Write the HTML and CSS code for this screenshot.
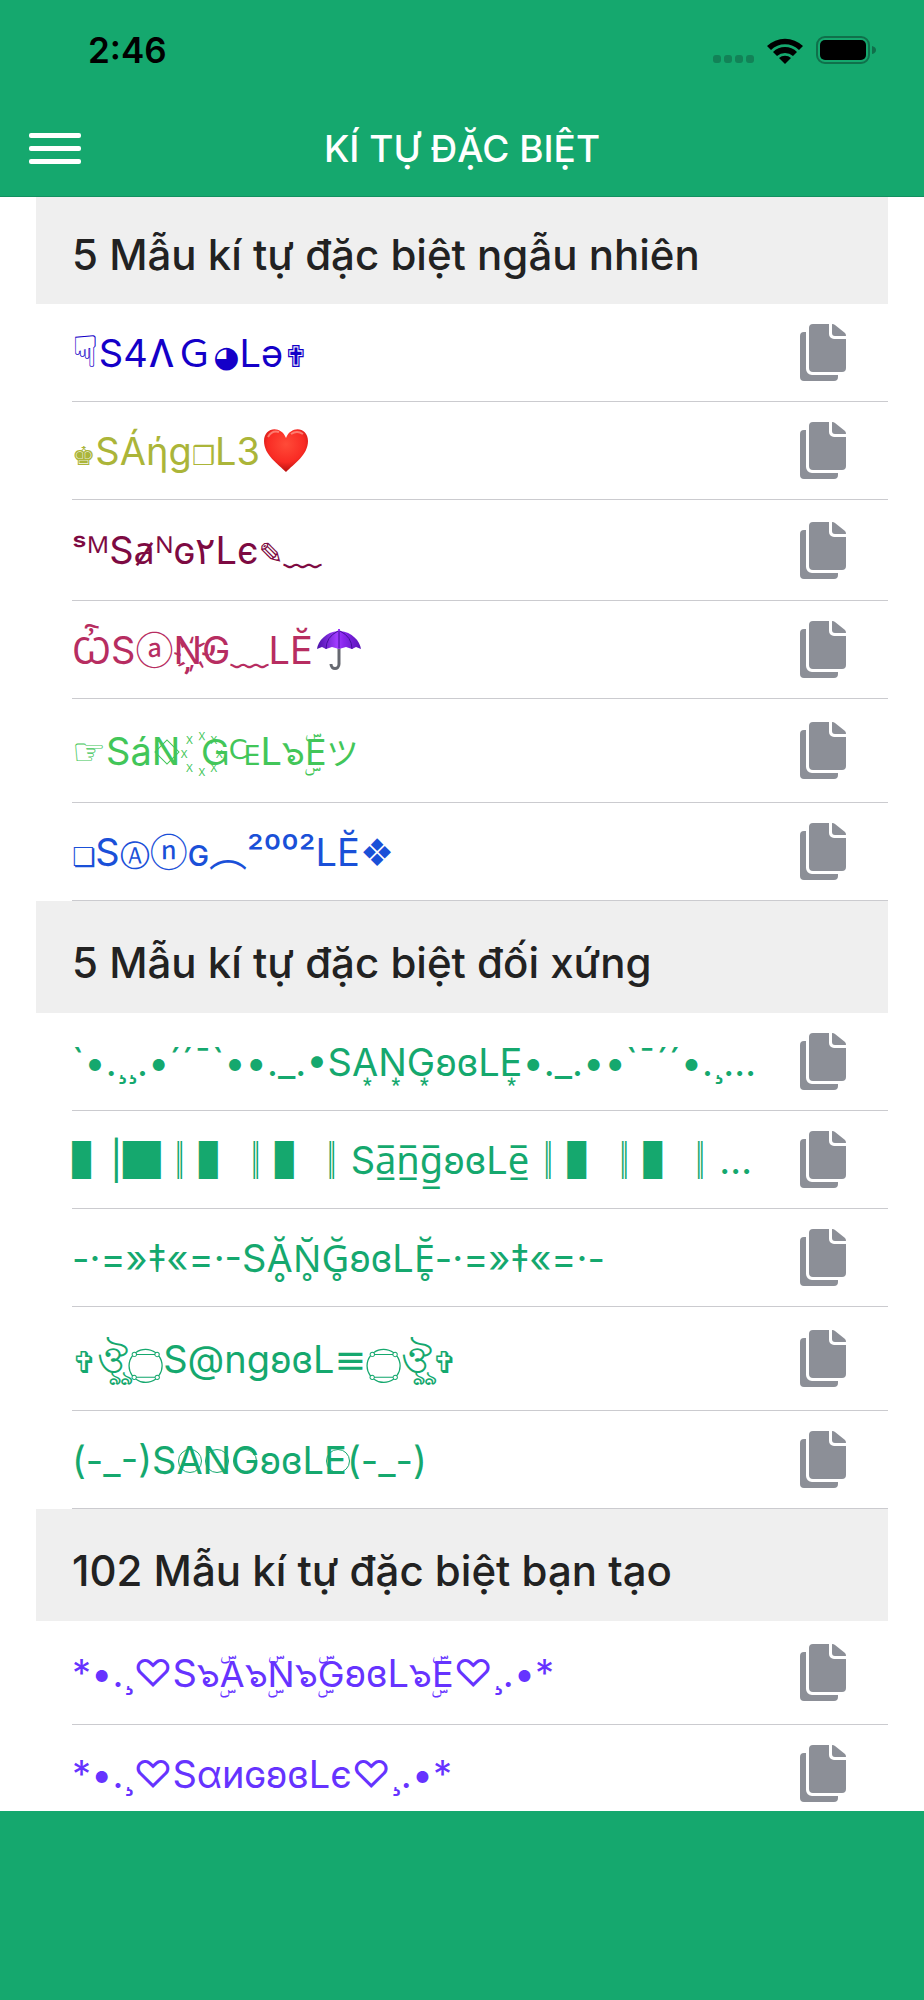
FILE: index.html
```html
<!DOCTYPE html>
<html lang="vi">
<head>
    <meta charset="UTF-8">
    <meta name="viewport" content="width=device-width, initial-scale=1.0">
    <title>Kí tự đặc biệt</title>
    <link rel="stylesheet" href="styles.css">
</head>
<body>
    <svg class="sprite" aria-hidden="true">
        <symbol id="copy" viewBox="0 0 46 57">
            <path d="M6 8H4a4 4 0 0 0-4 4v41a4 4 0 0 0 4 4h30a4 4 0 0 0 4-4v-2H12a6 6 0 0 1-6-6z"/>
            <path d="M13 0h16v10a5 5 0 0 0 5 5h12v29a4 4 0 0 1-4 4H13a4 4 0 0 1-4-4V4a4 4 0 0 1 4-4z"/>
            <path d="M32 0q2 0 3 1l10 8q1 1 1 3H35q-3 0-3-3z"/>
        </symbol>
    </svg>

    <div class="app">
        <div class="status-bar">
            <span class="time">2:46</span>
            <div class="status-icons">
                <span class="signal"><i></i><i></i><i></i><i></i></span>
                <svg class="wifi" viewBox="0 0 36 27">
                    <path d="M0 9a26 26 0 0 1 36 0l-4 4a20 20 0 0 0-28 0z"/>
                    <path d="M6 15a17 17 0 0 1 24 0l-4 4a12 12 0 0 0-16 0z"/>
                    <path d="M12 21a9 9 0 0 1 12 0l-6 6z"/>
                </svg>
                <svg class="battery" viewBox="0 0 60 28">
                    <rect class="battery-case" x="1" y="1" width="52" height="26" rx="8"/>
                    <rect x="4" y="4" width="46" height="20" rx="5"/>
                    <path class="battery-tip" d="M56 10q4 1 4 4t-4 4z"/>
                </svg>
            </div>
        </div>

        <header class="header">
            <button class="menu-btn" aria-label="Menu"><span></span><span></span><span></span></button>
            <h1>KÍ TỰ ĐẶC BIỆT</h1>
        </header>

        <main class="list">
            <section>
                <h2 class="first">5 Mẫu kí tự đặc biệt ngẫu nhiên</h2>
                <ul>
                    <li class="navy"><span class="name"><span class="sym-lg">&#x261F;</span>S4Ʌ<span class="cjk">&#xFF27;</span><span class="sym">◕</span>Lə<span class="sym">✟</span></span><button class="copy-btn" aria-label="Sao chép"><svg><use href="#copy"/></svg></button></li>
                    <li class="olive"><span class="name"><span class="sym-sm">♚</span>SÁήg<span class="sym-sm">❒</span>L3<svg class="emoji" viewBox="0 0 44 44"><defs><radialGradient id="heart" cx=".5" cy=".35" r=".7"><stop offset="0" stop-color="#ff4b38"/><stop offset=".6" stop-color="#f92b24"/><stop offset="1" stop-color="#a90b0b"/></radialGradient></defs><path fill="url(#heart)" d="M22 43C14 35 0 26 0 12 0-2 17-4 22 9 27-4 44-2 44 12 44 26 30 35 22 43z"/><path fill="none" stroke="#ffb0a0" stroke-width="2" opacity=".6" d="M4 8q4-7 11-5M27 5q6-4 12 0"/></svg></span><button class="copy-btn" aria-label="Sao chép"><svg><use href="#copy"/></svg></button></li>
                    <li class="maroon tall"><span class="name">ˢᴹSⱥᴺɢ٢Lє<span class="sym">✎</span><span class="cjk">﹏</span></span><button class="copy-btn" aria-label="Sao chép"><svg><use href="#copy"/></svg></button></li>
                    <li class="rose"><span class="name">ѼS<span class="cjk">ⓐ</span>N̦̓҉G<span class="cjk">﹏</span>LĔ<svg class="emoji" viewBox="0 0 44 44"><defs><linearGradient id="umbrella"><stop offset="0" stop-color="#4a12a8"/><stop offset=".45" stop-color="#a13cff"/><stop offset=".6" stop-color="#8a26ee"/><stop offset="1" stop-color="#5814b8"/></linearGradient></defs><path fill="none" stroke="#666970" stroke-width="3" d="M22 18v18c0 6-8 6-8 0"/><path fill="url(#umbrella)" d="M21 3V1h2v2c12 1 20 10 21 18l-5-2-4 2-6-2-7 2-7-2-6 2-4-2-5 2C1 13 9 4 21 3z"/><path fill="none" stroke="#43109a" d="M21 3Q9 9 9 21M23 3q12 6 12 18M22 3v17"/></svg></span><button class="copy-btn" aria-label="Sao chép"><svg><use href="#copy"/></svg></button></li>
                    <li class="green taller"><span class="name"><span class="sym-md">☞</span>Sá<span class="diamond">N</span>&nbsp;&nbsp;꙰<span class="wide">Ꮐ₠</span>L<span class="thai">๖ۣۜE</span><span class="cjk-sm">ツ</span></span><button class="copy-btn" aria-label="Sao chép"><svg><use href="#copy"/></svg></button></li>
                    <li class="blue"><span class="name"><span class="sym-sm">❏</span>S<span class="sym">Ⓐ</span><span class="cjk">ⓝ</span>ɢ<span class="cjk">︵</span>²⁰⁰²LĔ<span class="sym-md">❖</span></span><button class="copy-btn" aria-label="Sao chép"><svg><use href="#copy"/></svg></button></li>
                </ul>
            </section>

            <section>
                <h2>5 Mẫu kí tự đặc biệt đối xứng</h2>
                <ul class="teal">
                    <li><span class="name">`•.¸¸.•´´¯`••._.•SA͙N͙G͙ʚɞLE͙•._.••`¯´´•.¸…</span><button class="copy-btn" aria-label="Sao chép"><svg><use href="#copy"/></svg></button></li>
                    <li><span class="name"><span class="cjk">▌</span>|<span class="cjk">█║▌║▌║</span>Sa̲̅n̲̅g̲̅ʚɞLe̲̅<span class="cjk">║▌║▌║</span>…</span><button class="copy-btn" aria-label="Sao chép"><svg><use href="#copy"/></svg></button></li>
                    <li><span class="name">-·=»‡«=·-SḀ̆N̥̆Ğ̥ʚɞLĔ̥-·=»‡«=·-</span><button class="copy-btn" aria-label="Sao chép"><svg><use href="#copy"/></svg></button></li>
                    <li class="taller"><span class="name"><span class="sym">✞</span>ঔৣ<span class="ayah">۝</span>S@ngʚɞL≡<span class="ayah">۝</span>ঔৣ<span class="sym">✞</span></span><button class="copy-btn" aria-label="Sao chép"><svg><use href="#copy"/></svg></button></li>
                    <li><span class="name">(-_-)S<span class="ring">A</span><span class="ring">N</span><span class="ring">G</span>ʚɞL<span class="ring">E</span>(-_-)</span><button class="copy-btn" aria-label="Sao chép"><svg><use href="#copy"/></svg></button></li>
                </ul>
            </section>

            <section>
                <h2>102 Mẫu kí tự đặc biệt bạn tạo</h2>
                <ul class="violet">
                    <li class="taller"><span class="name">*•.¸♡S<span class="thai">๖ۣۜA๖ۣۜN๖ۣۜG</span>ʚɞL<span class="thai">๖ۣۜE</span>♡¸.•*</span><button class="copy-btn" aria-label="Sao chép"><svg><use href="#copy"/></svg></button></li>
                    <li><span class="name">*•.¸♡SαиɢʚɞLє♡¸.•*</span><button class="copy-btn" aria-label="Sao chép"><svg><use href="#copy"/></svg></button></li>
                </ul>
            </section>
        </main>

        <footer class="footer"></footer>
    </div>
</body>
</html>
```
FILE: styles.css
```css
* {
    margin: 0;
    padding: 0;
    box-sizing: border-box;
}

body {
    font-family: Inter, 'Noto Sans', 'DejaVu Sans', 'Noto Sans CJK JP', sans-serif;
    background: #fff;
}

.sprite {
    display: none;
}

.app {
    height: 100vh;
    display: flex;
    flex-direction: column;
}

/* status bar */
.status-bar {
    flex: none;
    height: 98px;
    padding: 2px 48px 0 88px;
    background: #15a86e;
    display: flex;
    justify-content: space-between;
    align-items: center;
}

.time {
    font-size: 35px;
    font-weight: 600;
}

.status-icons {
    display: flex;
    align-items: center;
    gap: 13px;
}

.signal {
    display: flex;
    gap: 3px;
    padding-top: 18px;
}

.signal i {
    width: 8px;
    height: 8px;
    border-radius: 3px;
    background: #128257;
}

.wifi {
    width: 36px;
    height: 27px;
}

.battery {
    width: 60px;
    height: 28px;
}

.battery-case {
    fill: none;
    stroke: #10704b;
    stroke-width: 2;
}

.battery-tip {
    fill: #10704b;
}

/* title bar */
.header {
    flex: none;
    height: 99px;
    padding: 2px 29px 0;
    background: #15a86e;
    border-bottom: 1px solid #129060;
    display: grid;
    grid-template-columns: 52px 1fr 52px;
    align-items: center;
}

.menu-btn {
    display: flex;
    flex-direction: column;
    gap: 8px;
    border: none;
    background: none;
    cursor: pointer;
}

.menu-btn span {
    height: 5px;
    border-radius: 2px;
    background: #fff;
}

h1 {
    color: #fff;
    font-size: 37px;
    font-weight: 500;
    text-align: center;
}

/* lists */
.list {
    flex: 1;
    min-height: 0;
    overflow: hidden;
    padding: 0 36px;
}

h2 {
    height: 112px;
    padding: 12px 36px 0;
    background: #efefef;
    color: #222;
    font-size: 42px;
    font-weight: 500;
    line-height: 100px;
    white-space: nowrap;
}

h2.first {
    height: 107px;
    padding-top: 8px;
}

ul {
    list-style: none;
    padding-left: 36px;
}

li {
    height: 98px;
    padding-right: 42px;
    border-bottom: 1px solid #cbcbcf;
    display: flex;
    justify-content: space-between;
    align-items: center;
    gap: 16px;
}

li.tall {
    height: 101px;
}

li.taller {
    height: 104px;
}

.name {
    flex: 1;
    min-width: 0;
    font-size: 38px;
    line-height: 84px;
    white-space: nowrap;
}

/* dingbats, sized to sit next to the letters */
.sym,
.sym-sm,
.sym-md,
.sym-lg {
    font-family: 'DejaVu Sans', sans-serif;
    font-size: 30px;
    line-height: 1;
}

.sym-sm {
    font-size: 26px;
}

.sym-md {
    font-size: 38px;
}

.sym-lg {
    font-size: 44px;
}

.wide {
    font-family: 'DejaVu Sans', sans-serif;
    font-size: 36px;
    line-height: 1;
}

.cjk,
.cjk-sm {
    font-family: 'Noto Sans CJK JP', sans-serif;
    line-height: 1;
}

.cjk-sm {
    font-size: 32px;
}

.thai {
    font-size: 36px;
    line-height: 1;
}

.ayah {
    font-size: 60px;
    line-height: 1;
}

.ring,
.diamond {
    position: relative;
}

.ring::after,
.diamond::after {
    content: '';
    position: absolute;
    left: 2px;
    top: 12px;
    width: 22px;
    height: 22px;
    border: 1px solid currentColor;
    border-radius: 50%;
}

.diamond::after {
    left: 6px;
    top: 15px;
    width: 16px;
    height: 16px;
    border-radius: 0;
    transform: rotate(45deg);
}

.emoji {
    width: 44px;
    height: 44px;
    margin-left: 4px;
    vertical-align: -8px;
}

.copy-btn {
    width: 46px;
    height: 57px;
    border: none;
    background: none;
    cursor: pointer;
}

.copy-btn svg {
    display: block;
    width: 46px;
    height: 57px;
    fill: #8c8f97;
}

.navy { color: #1400c8; }
.olive { color: #abb539; }
.maroon { color: #7d0a42; }
.rose { color: #b72d61; }
.green { color: #42c659; }
.blue { color: #1a50d8; }
.teal { color: #15a86e; }
.violet { color: #6633ff; }

.footer {
    flex: none;
    height: 189px;
    background: #15a86e;
}
```
